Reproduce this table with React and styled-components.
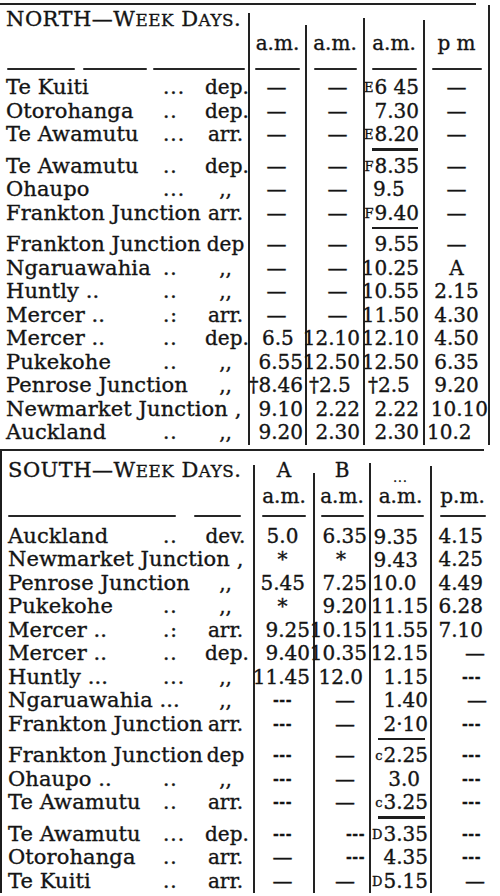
import React from 'react';
import styled, { createGlobalStyle, css } from 'styled-components';

const Global = createGlobalStyle`
  html, body { margin: 0; padding: 0; background: #fff; }
  body {
    font-family: "DejaVu Serif", "Liberation Serif", serif;
    color: #141414;
    -webkit-text-stroke: 0.35px #141414;
  }
`;

const Page = styled.div`
  width: 500px;
  height: 896px;
  overflow: hidden;
  background: #fff;
  font-size: 20px;
`;

const TopRule = styled.div`
  margin-top: 3px;
  width: 476px;
  height: 2px;
  background: #222;
`;

const MidRule = styled.div`
  margin-top: 4px;
  width: 484px;
  height: 2px;
  background: #222;
`;

const Section = styled.section`
  box-sizing: border-box;
  width: ${(p) => p.$w}px;
  border-left: ${(p) => (p.$left ? '2px solid #1c1c1c' : 'none')};
  border-right: ${(p) => (p.$right ? '2px solid #222' : 'none')};
`;

const Row = styled.div`
  display: grid;
  grid-template-columns: ${(p) => p.$cols};
  grid-template-rows: ${(p) => (p.$ruled ? 31.5 : 23.5)}px;
`;

const HeadRow = styled.div`
  display: grid;
  grid-template-columns: ${(p) => p.$cols};
  grid-template-rows: ${(p) => p.$h}px;
`;

const HeadStation = styled.div`
  min-height: 0;
  display: flex;
  flex-direction: column;
  justify-content: space-between;
  padding: ${(p) => p.$pt}px 0 ${(p) => p.$pb}px 6px;
`;

const Title = styled.div`
  font-size: 21px;
  letter-spacing: 0.5px;
  line-height: 24px;
  white-space: nowrap;
`;

const SmallCaps = styled.span`
  text-transform: uppercase;
  font-size: 0.8em;
`;

const RuleLine = styled.div`
  display: flex;
  align-items: center;
`;

const Dash = styled.span`
  display: block;
  flex: none;
  width: ${(p) => p.$w}px;
  height: 2px;
  margin-left: ${(p) => p.$ml || 0}px;
  background: #262626;
  border-radius: 1px;
`;

const HeadCell = styled.div`
  min-height: 0;
  margin-top: ${(p) => p.$mt}px;
  display: flex;
  flex-direction: column;
  justify-content: flex-end;
  align-items: center;
  padding-bottom: ${(p) => p.$pb}px;
  border-left: 2px solid #222;
`;

const HeadMark = styled.div`
  flex: none;
  line-height: 20px;
  margin-bottom: ${(p) => p.$mb}px;
  white-space: nowrap;
  ${(p) =>
    p.$tiny &&
    css`
      font-size: 12px;
      letter-spacing: 1px;
      line-height: 10px;
    `}
`;

const Station = styled.div`
  display: grid;
  grid-template-columns: ${(p) => p.$name}px 42px 41px;
  padding-left: 6px;
  line-height: 23.5px;
  white-space: nowrap;
`;

const Name = styled.span`
  font-size: 21px;
  letter-spacing: 0.1px;
`;

const Dots = styled.span`
  letter-spacing: 1px;
`;

const Suffix = styled.span`
  text-align: center;
`;

const Cell = styled.div`
  position: relative;
  display: flex;
  align-items: flex-start;
  justify-content: ${(p) => ({ l: 'flex-start', c: 'center', r: 'flex-end' }[p.$a])};
  padding: ${(p) => p.$pt || 0}px ${(p) => p.$pr || 0}px 0 ${(p) => p.$pl || 0}px;
  border-left: 2px solid #222;
  line-height: 23.5px;
  white-space: nowrap;
  ${(p) =>
    p.$ruled &&
    css`
      &::after {
        content: '';
        position: absolute;
        left: 7px;
        right: 5px;
        bottom: 4px;
        height: 2.5px;
        background: #1e1e1e;
      }
    `}
`;

const Pre = styled.span`
  font-size: 13px;
  margin-right: 1px;
`;

const Small = styled.span`
  font-size: 14px;
  font-weight: bold;
  letter-spacing: 0.5px;
`;

const COLS_N = '248px 57px 58px 60px 65px';
const COLS_S = '251px 60px 56px 61px 63px';

const DEF_N = [
  { a: 'r', pr: 2 },
  { a: 'r', pr: 3 },
  { a: 'r', pr: 4 },
  { a: 'c', pr: 0 },
];
const DEF_S = [
  { a: 'r', pr: 3 },
  { a: 'r', pr: 2 },
  { a: 'r', pr: 2 },
  { a: 'r', pr: 10 },
];

const D = { t: '—', a: 'c' };
const D2 = { t: '—', a: 'c', pl: 8 };
const SD = { t: '---', a: 'c', small: true };
const SD4 = { t: '---', a: 'r', pr: 12, small: true };

const north = [
  { name: 'Te Kuiti', dots: '...', suf: 'dep.', cells: [D, D2, { t: '6 45', pre: 'E' }, D] },
  { name: 'Otorohanga', dots: '..', suf: 'dep.', cells: [D, D2, '7.30', D] },
  { name: 'Te Awamutu', dots: '...', suf: 'arr.', ruled: true, cells: [D, D2, { t: '8.20', pre: 'E' }, D] },
  { name: 'Te Awamutu', dots: '..', suf: 'dep.', cells: [D, D2, { t: '8.35', pre: 'F' }, D] },
  { name: 'Ohaupo', dots: '...', suf: ',,', cells: [D, D2, { t: '9.5', a: 'l', pl: 8 }, D] },
  { name: 'Frankton Junction', dots: '', suf: 'arr.', ruled: true, cells: [D, D2, { t: '9.40', pre: 'F' }, D] },
  { name: 'Frankton Junction', dots: '', suf: 'dep', cells: [D, D2, '9.55', D] },
  { name: 'Ngaruawahia', dots: '..', suf: ',,', cells: [D, D2, '10.25', { t: 'A', a: 'c' }] },
  { name: 'Huntly ..', dots: '..', suf: ',,', cells: [D, D2, '10.55', '2.15'] },
  { name: 'Mercer ..', dots: '.:', suf: 'arr.', cells: [D, D2, '11.50', '4.30'] },
  { name: 'Mercer ..', dots: '..', suf: 'dep.', cells: [{ t: '6.5', a: 'l', pl: 12 }, '12.10', '12.10', '4.50'] },
  { name: 'Pukekohe', dots: '..', suf: ',,', cells: ['6.55', '12.50', '12.50', '6.35'] },
  { name: 'Penrose Junction', dots: '', suf: ',,', cells: ['†8.46', { t: '†2.5', a: 'l', pl: 2 }, { t: '†2.5', a: 'l', pl: 3 }, '9.20'] },
  { name: 'Newmarket Junction ,', dots: '', suf: '', cells: ['9.10', '2.22', '2.22', { t: '10.10', a: 'r', pr: 0 }] },
  { name: 'Auckland', dots: '..', suf: ',,', cells: ['9.20', '2.30', '2.30', { t: '10.2', a: 'l', pl: 2 }] },
];

const S3 = (t) => ({ t, a: 'r', pr: 12, pt: 1 });

const south = [
  { name: 'Auckland', dots: '..', suf: 'dev.', cells: [{ t: '5.0', a: 'c' }, '6.35', S3('9.35'), '4.15'] },
  { name: 'Newmarket Junction ,', dots: '', suf: '', cells: [{ t: '*', a: 'c' }, { t: '*', a: 'c' }, S3('9.43'), '4.25'] },
  { name: 'Penrose Junction', dots: '', suf: ',,', cells: [{ t: '5.45', a: 'r', pr: 8 }, '7.25', { t: '10.0', a: 'l', pl: 1, pt: 0 }, '4.49'] },
  { name: 'Pukekohe', dots: '..', suf: ',,', cells: [{ t: '*', a: 'c' }, '9.20', { t: '11.15', a: 'l', pl: 0, pt: 0 }, '6.28'] },
  { name: 'Mercer ..', dots: '.:', suf: 'arr.', cells: ['9.25', '10.15', { t: '11.55', a: 'l', pl: 0, pt: 0 }, '7.10'] },
  { name: 'Mercer ..', dots: '..', suf: 'dep.', cells: ['9.40', '10.35', '12.15', { t: '—', a: 'r', pr: 8 }] },
  { name: 'Huntly ...', dots: '...', suf: ',,', cells: ['11.45', { t: '12.0', a: 'r', pr: 6 }, '1.15', SD4] },
  { name: 'Ngaruawahia ...', dots: '', suf: ',,', cells: [SD, D2, '1.40', { t: '—', a: 'r', pr: 6 }] },
  { name: 'Frankton Junction', dots: '', suf: 'arr.', ruled: true, cells: [SD, D2, '2·10', SD4] },
  { name: 'Frankton Junction', dots: '', suf: 'dep', cells: [SD, D2, { t: '2.25', pre: 'c' }, SD4] },
  { name: 'Ohaupo ..', dots: '..', suf: ',,', cells: [SD, D2, { t: '3.0', a: 'r', pr: 10 }, SD4] },
  { name: 'Te Awamutu', dots: '..', suf: 'arr.', ruled: true, cells: [SD, D2, { t: '3.25', pre: 'c' }, SD4] },
  { name: 'Te Awamutu', dots: '...', suf: 'dep.', cells: [SD, { t: '---', a: 'r', pr: 4, small: true }, { t: '3.35', pre: 'D' }, SD4] },
  { name: 'Otorohanga', dots: '..', suf: 'arr.', cells: [D, { t: '---', a: 'r', pr: 4, small: true }, '4.35', SD4] },
  { name: 'Te Kuiti', dots: '..', suf: 'arr.', cells: [D, D2, { t: '5.15', pre: 'D' }, { t: '—', a: 'r', pr: 8 }] },
];

function TimeCell({ spec, def, ruled }) {
  const s = typeof spec === 'string' ? { t: spec } : spec;
  const o = { ...def, ...s };
  return (
    <Cell $a={o.a} $pl={o.pl} $pr={o.pr} $pt={o.pt} $ruled={ruled}>
      {o.pre && <Pre>{o.pre}</Pre>}
      {o.small ? <Small>{o.t}</Small> : o.t}
    </Cell>
  );
}

function DataRow({ r, cols, defs, nameW }) {
  return (
    <Row $cols={cols} $ruled={r.ruled}>
      <Station $name={nameW}>
        <Name>{r.name}</Name>
        <Dots>{r.dots}</Dots>
        <Suffix>{r.suf}</Suffix>
      </Station>
      {r.cells.map((c, i) => (
        <TimeCell key={i} spec={c} def={defs[i]} ruled={r.ruled && i === 2} />
      ))}
    </Row>
  );
}

export default function App() {
  return (
    <Page>
      <Global />
      <TopRule />
      <Section $w={490} $right>
        <HeadRow $cols={COLS_N} $h={71}>
          <HeadStation $pt={2} $pb={6}>
            <Title>
              NORTH—W<SmallCaps>eek</SmallCaps> D<SmallCaps>ays</SmallCaps>.
            </Title>
            <RuleLine>
              <Dash $w={68} $ml={1} />
              <Dash $w={64} $ml={8} />
              <Dash $w={92} $ml={6} />
            </RuleLine>
          </HeadStation>
          <HeadCell $mt={8} $pb={6}>
            <HeadMark $mb={15}>a.m.</HeadMark>
            <Dash $w={45} />
          </HeadCell>
          <HeadCell $mt={20} $pb={6}>
            <HeadMark $mb={15}>a.m.</HeadMark>
            <Dash $w={43} />
          </HeadCell>
          <HeadCell $mt={13} $pb={6}>
            <HeadMark $mb={15}>a.m.</HeadMark>
            <Dash $w={45} />
          </HeadCell>
          <HeadCell $mt={15} $pb={6}>
            <HeadMark $mb={15}>p m</HeadMark>
            <Dash $w={50} />
          </HeadCell>
        </HeadRow>
        {north.map((r, i) => (
          <DataRow key={i} r={r} cols={COLS_N} defs={DEF_N} nameW={157} />
        ))}
      </Section>
      <MidRule />
      <Section $w={493} $left>
        <HeadRow $cols={COLS_S} $h={74}>
          <HeadStation $pt={7} $pb={8}>
            <Title>
              SOUTH—W<SmallCaps>eek</SmallCaps> D<SmallCaps>ays</SmallCaps>.
            </Title>
            <RuleLine>
              <Dash $w={168} $ml={0} />
              <Dash $w={47} $ml={18} />
            </RuleLine>
          </HeadStation>
          <HeadCell $mt={14} $pb={8}>
            <HeadMark $mb={6}>A</HeadMark>
            <HeadMark $mb={9}>a.m.</HeadMark>
            <Dash $w={44} />
          </HeadCell>
          <HeadCell $mt={22} $pb={8}>
            <HeadMark $mb={6}>B</HeadMark>
            <HeadMark $mb={9}>a.m.</HeadMark>
            <Dash $w={43} />
          </HeadCell>
          <HeadCell $mt={12} $pb={8}>
            <HeadMark $mb={3} $tiny>...</HeadMark>
            <HeadMark $mb={9}>a.m.</HeadMark>
            <Dash $w={47} />
          </HeadCell>
          <HeadCell $mt={15} $pb={8}>
            <HeadMark $mb={9}>p.m.</HeadMark>
            <Dash $w={46} />
          </HeadCell>
        </HeadRow>
        {south.map((r, i) => (
          <DataRow key={i} r={r} cols={COLS_S} defs={DEF_S} nameW={155} />
        ))}
      </Section>
    </Page>
  );
}
